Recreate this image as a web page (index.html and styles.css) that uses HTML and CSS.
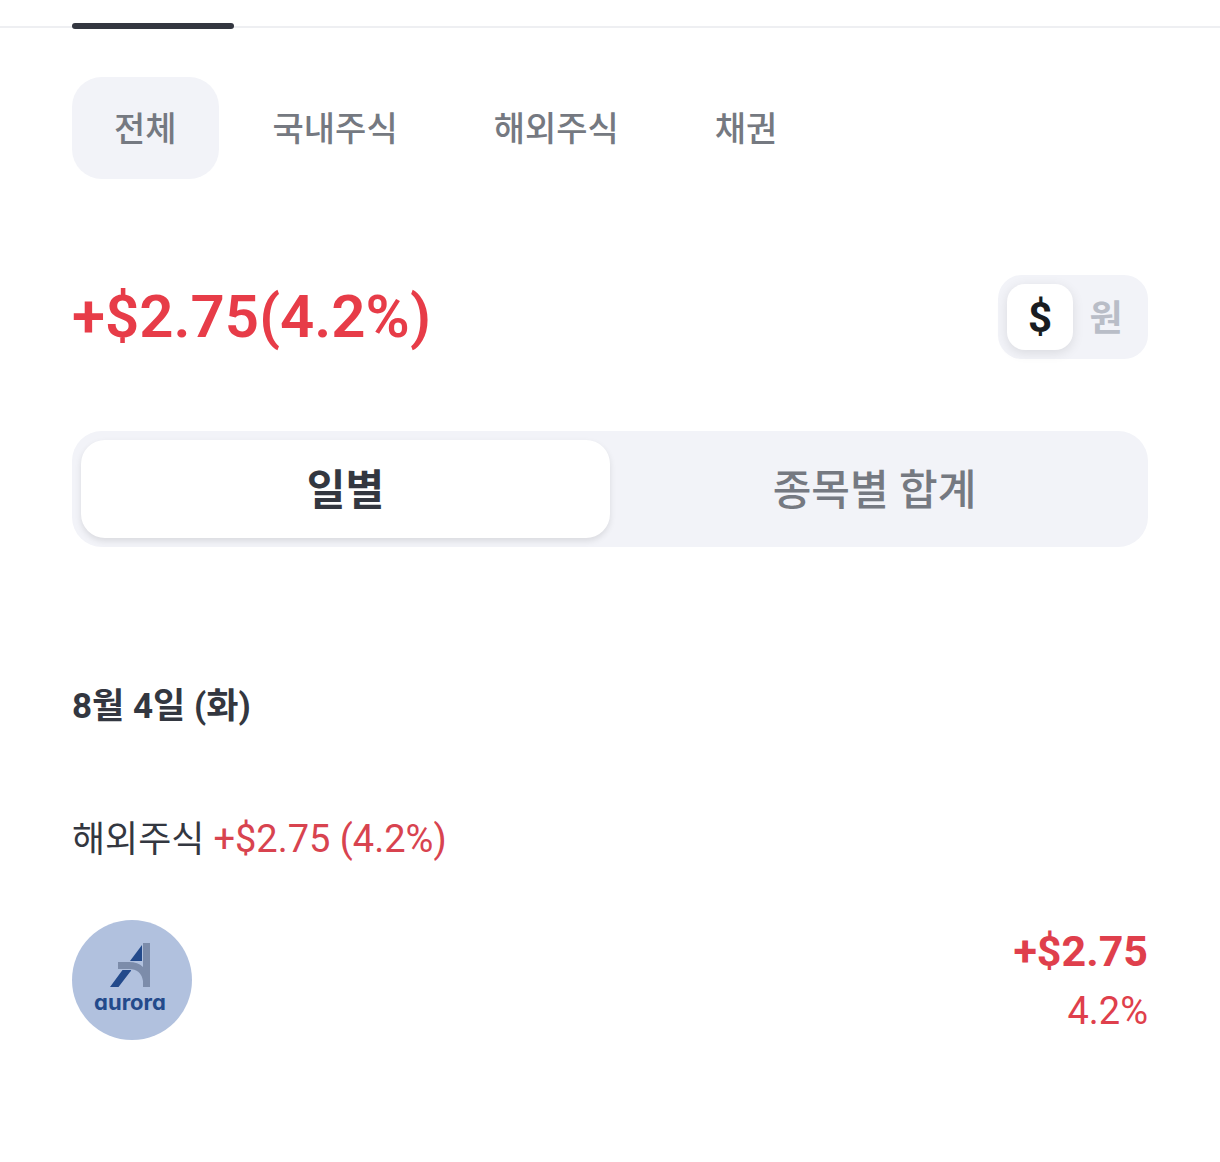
FILE: index.html
```html
<!DOCTYPE html>
<html lang="ko">
<head>
	<meta charset="UTF-8">
	<meta name="viewport" content="width=device-width, initial-scale=1.0">
	<title>판매수익</title>
	<link rel="stylesheet" href="styles.css">
</head>
<body>
	<div class="tabline">
		<div class="tabline-active"></div>
	</div>

	<main class="content">
		<nav class="filters">
			<button type="button" class="filter active">전체</button>
			<button type="button" class="filter">국내주식</button>
			<button type="button" class="filter">해외주식</button>
			<button type="button" class="filter">채권</button>
		</nav>

		<div class="summary">
			<h1 class="total">+$2.75(4.2%)</h1>
			<div class="currency">
				<button type="button" class="currency-btn active">$</button>
				<button type="button" class="currency-btn">원</button>
			</div>
		</div>

		<div class="segment">
			<button type="button" class="segment-btn active">일별</button>
			<button type="button" class="segment-btn">종목별 합계</button>
		</div>

		<section class="day">
			<h2 class="date">8월 4일 (화)</h2>
			<p class="group">해외주식 <span class="up">+$2.75 (4.2%)</span></p>
			<div class="stock">
				<svg class="logo" viewBox="0 0 120 120">
					<circle cx="60" cy="60" r="60" fill="#b1c1de"/>
					<path d="M70 25V41H58Z" fill="#234a8b"/>
					<path d="M50.500 50H58.500Q60 50 58 52L46.500 67H38Z" fill="#234a8b"/>
					<path d="M71 23H78V67H71V61Q69 49 57 49H46V42H57Q66 42 71 47Z" fill="#7c8caa"/>
					<text class="logo-text" x="58" y="90" text-anchor="middle">aurora</text>
				</svg>
				<div class="profit">
					<strong class="profit-amount">+$2.75</strong>
					<span class="profit-rate">4.2%</span>
				</div>
			</div>
		</section>
	</main>
</body>
</html>
```
FILE: styles.css
```css
* {
	box-sizing: border-box;
}

body {
	margin: 0;
	background-color: #fff;
	color: #333740;
	font-family: Roboto, "Noto Sans CJK KR", sans-serif;
}

button {
	margin: 0;
	padding: 0 0 4px;
	border: 0;
	background: none;
	font-family: inherit;
	cursor: pointer;
}

h1, h2, p {
	margin: 0;
}

/* bottom edge of the page tabs */
.tabline {
	margin-top: 23px;
	padding: 0 72px;
	background: linear-gradient(#eeeff2, #eeeff2) 0 3px / 100% 2px no-repeat;
}

.tabline-active {
	width: 162px;
	height: 6px;
	border-radius: 3px;
	background-color: #333640;
}

.content {
	padding: 48px 72px;
}

.filters {
	display: flex;
	gap: 12px;
}

.filter {
	height: 102px;
	padding: 0 42px 4px;
	border-radius: 30px;
	color: #757981;
	font-size: 34px;
	font-weight: 500;
}

.filter.active {
	background-color: #f2f3f8;
}

.summary {
	display: flex;
	justify-content: space-between;
	align-items: center;
	margin-top: 96px;
}

.total {
	color: #e73c48;
	font-size: 60px;
	line-height: 84px;
	font-weight: 600;
}

.currency {
	display: flex;
	padding: 9px;
	border-radius: 24px;
	background-color: #f2f3f8;
}

.currency-btn {
	width: 66px;
	height: 66px;
	border-radius: 18px;
	color: #b9bdc7;
	font-size: 36px;
	font-weight: 700;
}

.currency-btn.active {
	padding: 0;
	background-color: #fff;
	color: #191c21;
	font-size: 42px;
	box-shadow: 0 3px 12px rgba(0, 0, 0, 0.1);
}

.segment {
	display: flex;
	margin-top: 72px;
	padding: 9px;
	border-radius: 30px;
	background-color: #f2f3f8;
}

.segment-btn {
	flex: 1;
	height: 98px;
	padding-bottom: 6px;
	border-radius: 24px;
	color: #757981;
	font-size: 42px;
	font-weight: 500;
}

.segment-btn.active {
	background-color: #fff;
	color: #333740;
	font-weight: 700;
	box-shadow: 0 3px 6px rgba(0, 0, 0, 0.1);
}

.day {
	margin-top: 132px;
}

.date {
	font-size: 35px;
	line-height: 56px;
	font-weight: 700;
}

.group {
	margin-top: 76px;
	font-size: 36px;
	line-height: 56px;
}

.up {
	color: #d8434f;
	font-size: 38px;
}

.stock {
	display: flex;
	justify-content: space-between;
	align-items: center;
	margin-top: 52px;
}

.logo {
	width: 120px;
	height: 120px;
}

.logo-text {
	fill: #234a8b;
	font-family: Inter, sans-serif;
	font-size: 22px;
	font-weight: 700;
	font-feature-settings: "cv11";
}

.profit {
	display: flex;
	flex-direction: column;
	align-items: flex-end;
	color: #df3f4c;
}

.profit-amount {
	font-size: 43px;
	line-height: 62px;
	font-weight: 700;
}

.profit-rate {
	font-size: 38px;
	line-height: 58px;
}
```
